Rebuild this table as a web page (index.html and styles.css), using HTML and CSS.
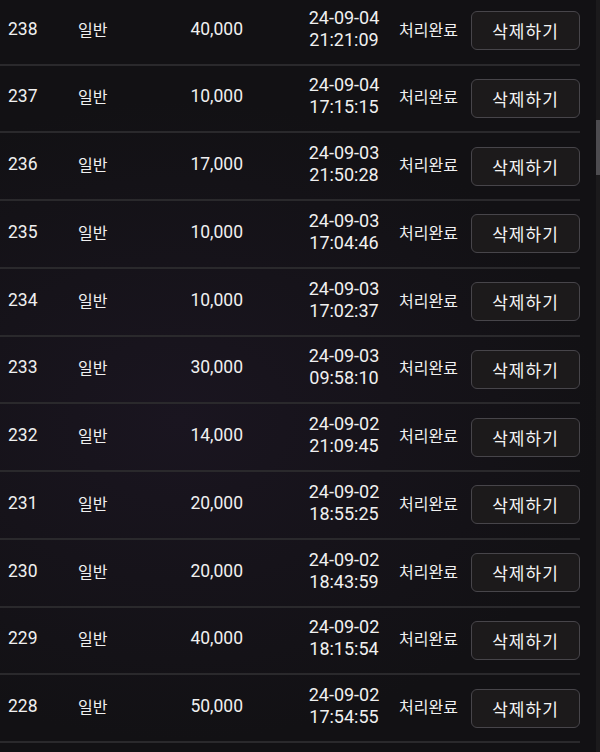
FILE: index.html
```html
<!DOCTYPE html>
<html lang="ko">
<head>
<meta charset="utf-8">
<link rel="stylesheet" href="styles.css">
</head>
<body>
<div class="page">
  <div class="list">
    <div class="row"><div class="c-no">238</div><div class="c-type">일반</div><div class="c-amt">40,000</div><div class="c-date">24-09-04<br>21:21:09</div><div class="c-status">처리완료</div><div class="c-act"><button class="btn">삭제하기</button></div></div>
    <div class="row"><div class="c-no">237</div><div class="c-type">일반</div><div class="c-amt">10,000</div><div class="c-date">24-09-04<br>17:15:15</div><div class="c-status">처리완료</div><div class="c-act"><button class="btn">삭제하기</button></div></div>
    <div class="row"><div class="c-no">236</div><div class="c-type">일반</div><div class="c-amt">17,000</div><div class="c-date">24-09-03<br>21:50:28</div><div class="c-status">처리완료</div><div class="c-act"><button class="btn">삭제하기</button></div></div>
    <div class="row"><div class="c-no">235</div><div class="c-type">일반</div><div class="c-amt">10,000</div><div class="c-date">24-09-03<br>17:04:46</div><div class="c-status">처리완료</div><div class="c-act"><button class="btn">삭제하기</button></div></div>
    <div class="row"><div class="c-no">234</div><div class="c-type">일반</div><div class="c-amt">10,000</div><div class="c-date">24-09-03<br>17:02:37</div><div class="c-status">처리완료</div><div class="c-act"><button class="btn">삭제하기</button></div></div>
    <div class="row"><div class="c-no">233</div><div class="c-type">일반</div><div class="c-amt">30,000</div><div class="c-date">24-09-03<br>09:58:10</div><div class="c-status">처리완료</div><div class="c-act"><button class="btn">삭제하기</button></div></div>
    <div class="row"><div class="c-no">232</div><div class="c-type">일반</div><div class="c-amt">14,000</div><div class="c-date">24-09-02<br>21:09:45</div><div class="c-status">처리완료</div><div class="c-act"><button class="btn">삭제하기</button></div></div>
    <div class="row"><div class="c-no">231</div><div class="c-type">일반</div><div class="c-amt">20,000</div><div class="c-date">24-09-02<br>18:55:25</div><div class="c-status">처리완료</div><div class="c-act"><button class="btn">삭제하기</button></div></div>
    <div class="row"><div class="c-no">230</div><div class="c-type">일반</div><div class="c-amt">20,000</div><div class="c-date">24-09-02<br>18:43:59</div><div class="c-status">처리완료</div><div class="c-act"><button class="btn">삭제하기</button></div></div>
    <div class="row"><div class="c-no">229</div><div class="c-type">일반</div><div class="c-amt">40,000</div><div class="c-date">24-09-02<br>18:15:54</div><div class="c-status">처리완료</div><div class="c-act"><button class="btn">삭제하기</button></div></div>
    <div class="row"><div class="c-no">228</div><div class="c-type">일반</div><div class="c-amt">50,000</div><div class="c-date">24-09-02<br>17:54:55</div><div class="c-status">처리완료</div><div class="c-act"><button class="btn">삭제하기</button></div></div>
  </div>
  <div class="scrollbar"><div class="thumb"></div></div>
</div>
</body>
</html>
```
FILE: styles.css
```css
html, body {
  margin: 0;
  padding: 0;
  height: 100%;
  overflow: hidden;
}
body {
  background: #121114;
  color: #f0f0f0;
  font-family: Roboto, "Noto Sans CJK KR", sans-serif;
  font-size: 17.5px;
}
.page {
  position: relative;
  width: 600px;
  height: 752px;
  overflow: hidden;
  background: radial-gradient(ellipse 420px 320px at 180px 420px, #1a1520 0%, #121114 100%);
}
.list {
  width: 580px;
  margin-top: -2.25px;
}
.row {
  display: grid;
  grid-template-columns: 70px 80px 140px 108px 73px 109px;
  align-items: center;
  height: 61.75px;
  padding-bottom: 4px;
  border-bottom: 2px solid #2a292c;
  box-sizing: content-box;
}
.c-no {
  padding-left: 8px;
}
.c-type {
  padding-left: 8px;
  font-family: "Noto Sans CJK KR", sans-serif;
  font-size: 16px;
}
.c-amt {
  text-align: right;
  padding-right: 47px;
}
.c-date {
  text-align: center;
  line-height: 22px;
  font-size: 18px;
}
.c-status {
  padding-left: 1px;
  font-family: "Noto Sans CJK KR", sans-serif;
  font-size: 16px;
}
.c-act {
  display: flex;
  margin-top: 4px;
}
.btn {
  width: 109px;
  height: 39px;
  background: #1c1a1b;
  border: 1.5px solid #47454a;
  border-radius: 6px;
  color: #f4f4f4;
  font-family: "Noto Sans CJK KR", sans-serif;
  font-size: 17px;
  letter-spacing: 1px;
  padding: 0;
}
.scrollbar {
  position: absolute;
  top: 0;
  right: 0;
  width: 4px;
  height: 752px;
  background: #1b1a1c;
}
.thumb {
  margin-top: 120px;
  height: 55px;
  background: #4d4c50;
}
```
